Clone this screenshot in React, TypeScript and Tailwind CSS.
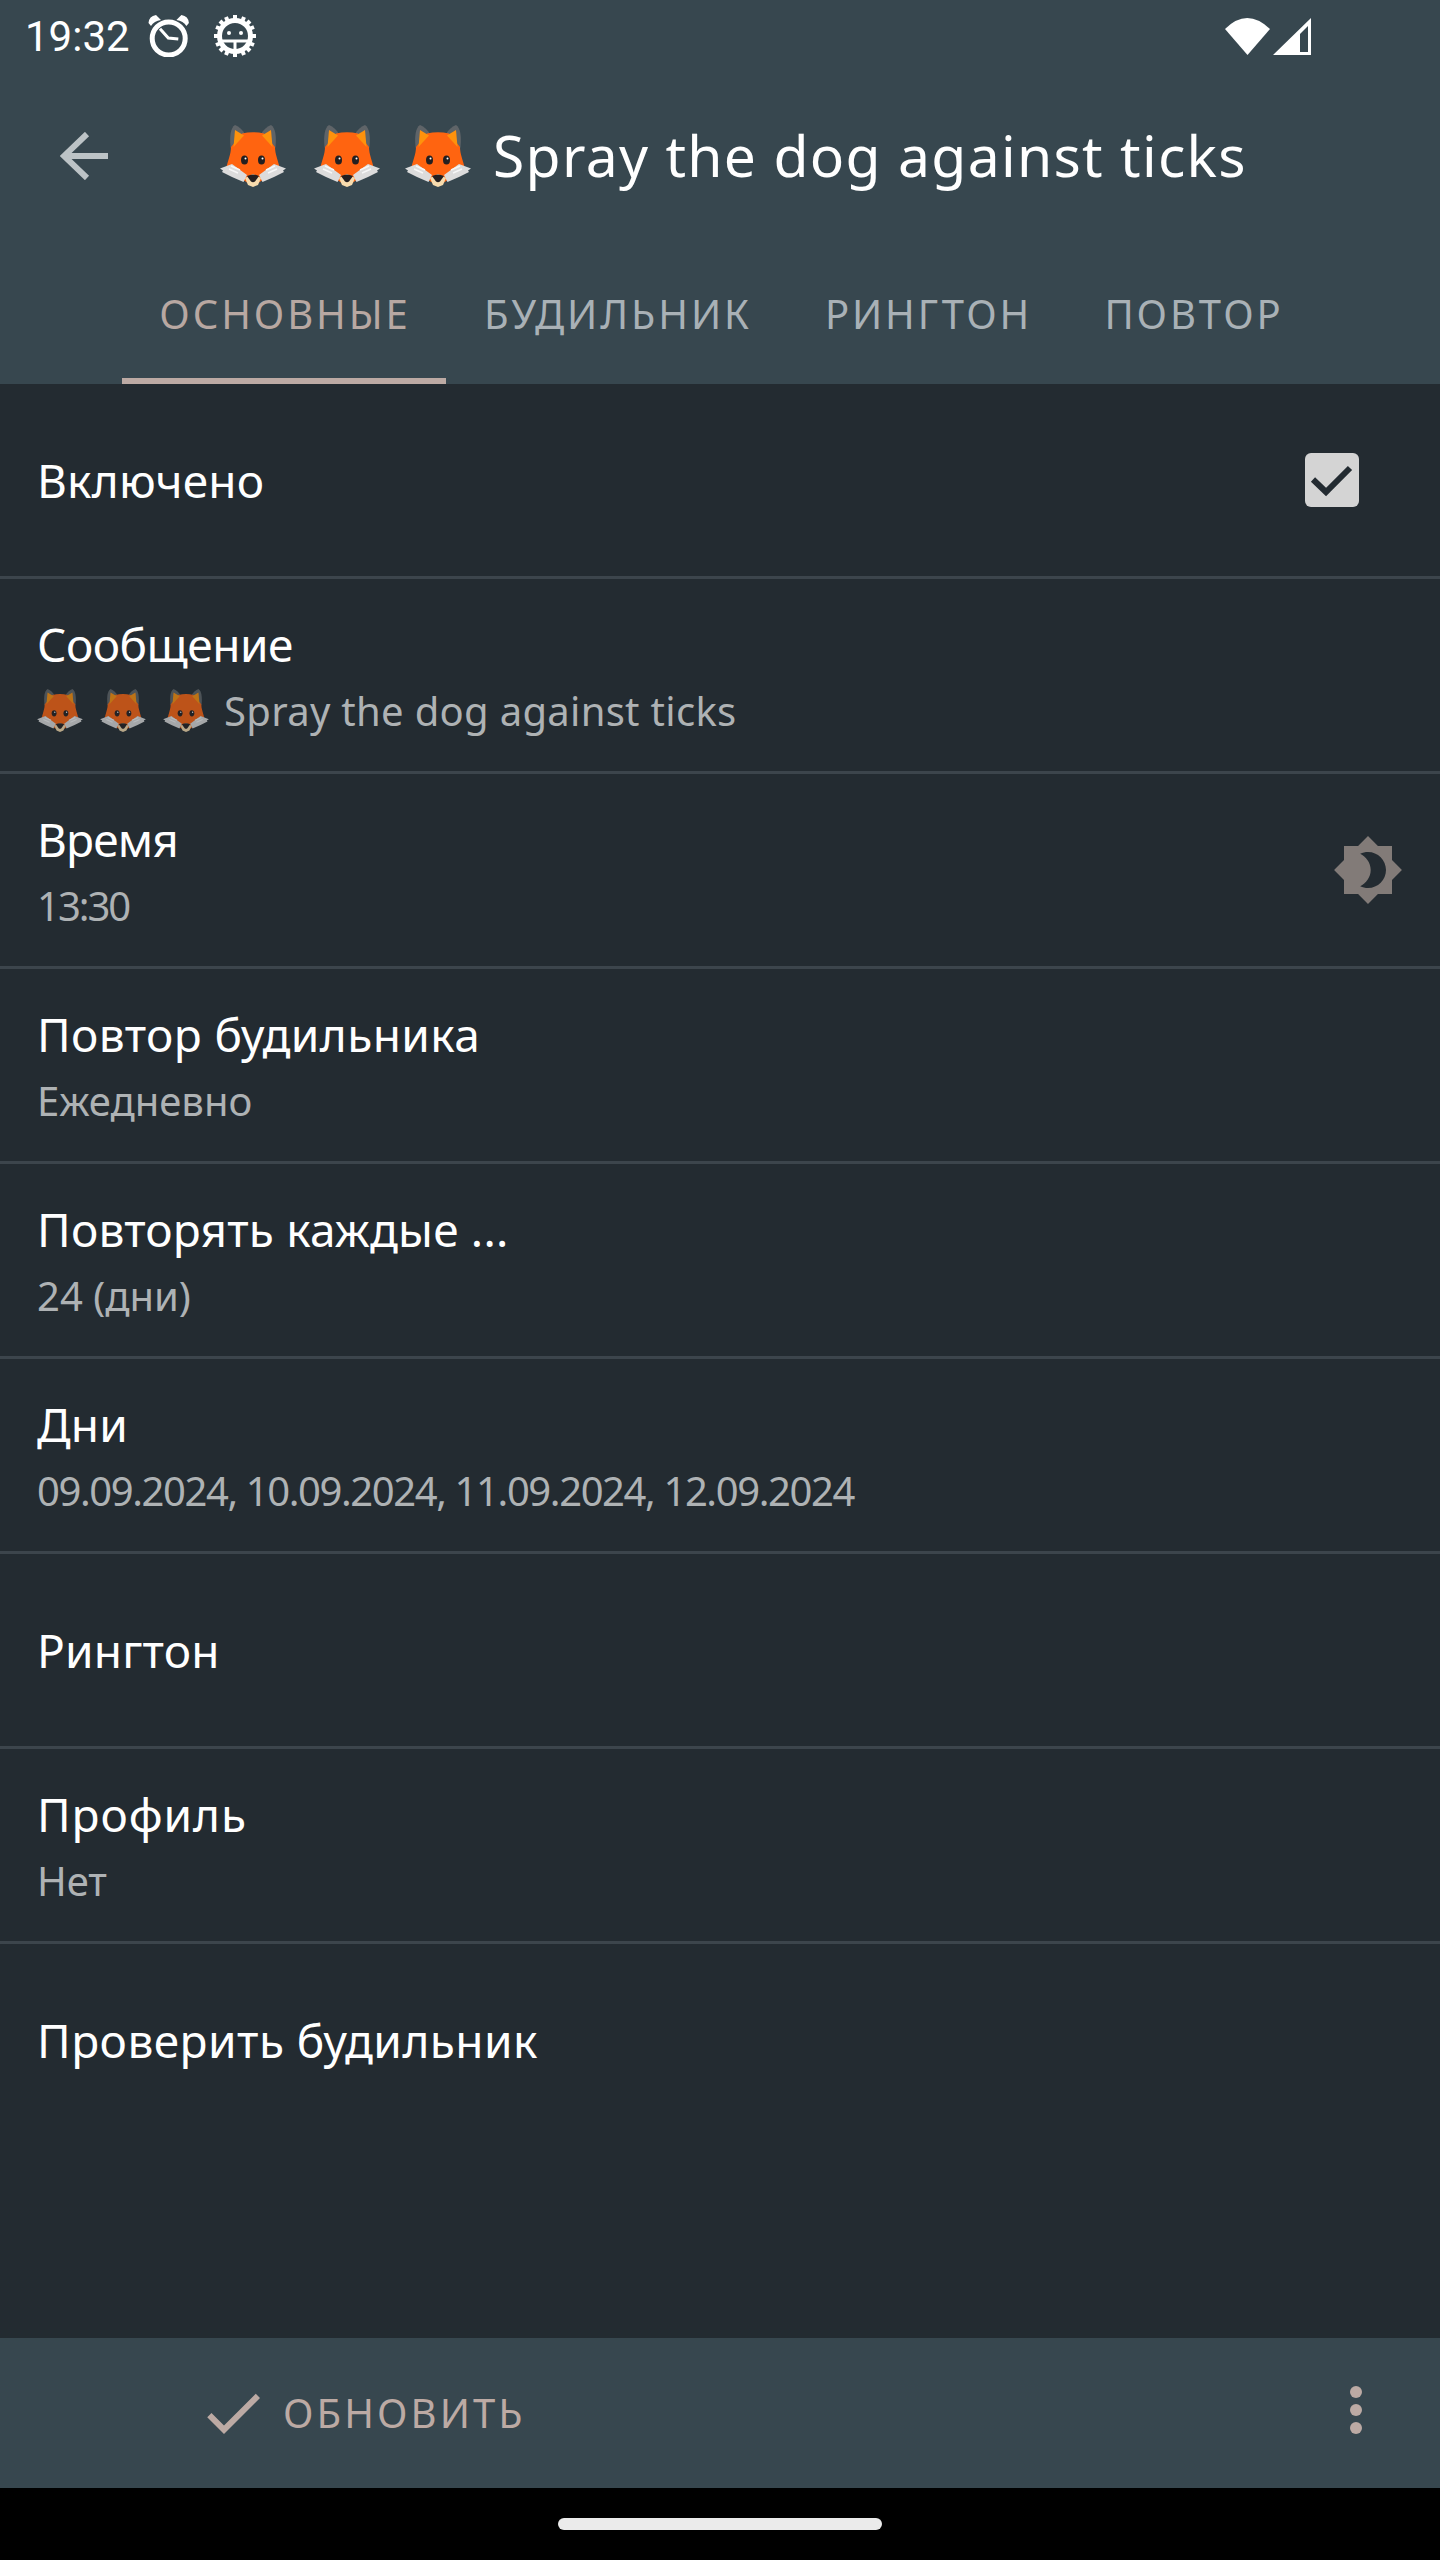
import { ReactNode } from "react";

const UI_FONT = "font-['Noto_Sans','Open_Sans',sans-serif]";

const Fox = ({ className }: { className: string }) => (
  <svg viewBox="0 0 66 62" className={className}>
    <path d="M10.5 22C9.5 11 10.5 3 15 0c4 1.5 8 5 10.5 10L12 26Z" fill="#5f6468" />
    <path d="M55.5 22C56.5 11 55.5 3 51 0c-4 1.5-8 5-10.5 10L54 26Z" fill="#5f6468" />
    <path d="M11 22 22 8.5Q33 6 44 8.5L55 22c0 7 3 13 5 22L35 60h-4L6 44c2-9 5-15 5-22Z" fill="#ff6410" />
    <path d="M15 5 13.5 22 24 10.5Z" fill="#ff920c" />
    <path d="M51 5 52.5 22 42 10.5Z" fill="#ff920c" />
    <path d="M0 43.5 12 39l15 11-3.5 7L12 52 2 47l1-1.5Z" fill="#dcdcdc" />
    <path d="M66 43.5 54 39 39 50l3.5 7L54 52l10-5-1-1.5Z" fill="#dcdcdc" />
    <path d="M9 44l9 4M11 41l9 4M48 48l9-4M46 45l9-4" stroke="#f7f7f7" strokeWidth="1.5" />
    <path d="M25 53l8-4 8 4-3 7-5 2-5-2Z" fill="#f8dcae" />
    <path d="M27 51Q33 48 39 51L35 56.5Q33 58 31 56.5Z" fill="#231f20" />
    <ellipse cx="24.5" cy="35" rx="3.5" ry="4.5" fill="#231f20" />
    <ellipse cx="41.5" cy="35" rx="3.5" ry="4.5" fill="#231f20" />
    <circle cx="25.5" cy="33.5" r="1" fill="white" />
    <circle cx="42.5" cy="33.5" r="1" fill="white" />
  </svg>
);

const Row = ({
  title,
  sub,
  titleClass = "tracking-[0.2px]",
  subClass = "",
  children,
}: {
  title: string;
  sub?: ReactNode;
  titleClass?: string;
  subClass?: string;
  children?: ReactNode;
}) => (
  <div className="h-[195px] border-b-[3px] border-[#3c454c] pl-[37px] flex items-center justify-between">
    <div className="flex flex-col gap-[13px]">
      <div className={`text-[46px] leading-[58px] text-white ${titleClass}`}>{title}</div>
      {sub && <div className={`text-[40px] leading-[50px] text-[#aeb2b4] ${subClass}`}>{sub}</div>}
    </div>
    {children}
  </div>
);

export default function App() {
  return (
    <div className={`w-[1440px] h-[2560px] flex flex-col bg-[#232b31] ${UI_FONT}`}>
      {/* status bar + toolbar + tabs */}
      <div className="h-[384px] bg-[#37474f] flex flex-col shrink-0">
        <div className="h-[72px] pl-[25px] pr-[129px] flex items-center justify-between">
          <div className="flex items-center">
            <span className="font-['Roboto',sans-serif] text-[42px] text-white w-[123px]">19:32</span>
            <svg viewBox="0 0 42 42" fill="none" stroke="white" className="w-[42px] h-[42px]">
              <circle cx="20.7" cy="23.5" r="16.5" strokeWidth="5" />
              <path d="M12 13.7 20.3 23l10 1" strokeWidth="3" />
              <path d="M0.5 8Q1 1 8 0l5 5Q6 6 3 11Z" fill="white" stroke="none" />
              <path d="M40.9 8Q40.4 1 33.4 0l-5 5q7 1 10 6Z" fill="white" stroke="none" />
            </svg>
            <svg viewBox="0 0 44 44" className="w-[44px] h-[44px] ml-[23px]">
              <circle cx="22" cy="22" r="15.5" fill="none" stroke="white" strokeWidth="5" />
              <path d="M22 1v6M22 37v6M1 22h6M37 22h6M7 7l4 4M33 33l4 4M37 7l-4 4M11 33l-4 4M13 3l2 5M31 41l-2-5M31 3l-2 5M13 41l2-5M3 13l5 2M41 31l-5-2M41 13l-5 2M3 31l5-2" stroke="white" strokeWidth="4" />
              <path d="M8 27h28M22 27v10" stroke="white" strokeWidth="3" />
              <circle cx="16" cy="19" r="2" fill="white" />
              <circle cx="28" cy="19" r="2" fill="white" />
            </svg>
          </div>
          <div className="flex items-center gap-[3px]">
            <svg viewBox="0 0 45 37" className="w-[45px] h-[37px]">
              <path d="M0 11 Q22 -11 45 11 L22.5 37 Z" fill="white" />
            </svg>
            <svg viewBox="0 0 38 37" className="w-[38px] h-[37px]">
              <path fillRule="evenodd" d="M38 0V37H0ZM35 8 27 16V34H35Z" fill="white" />
            </svg>
          </div>
        </div>
        <div className="h-[168px] flex items-center relative pl-[60px]">
          <svg viewBox="0 0 48 48" fill="none" stroke="#bcc3c6" strokeWidth="6" className="w-[48px] h-[48px]">
            <path d="M48 24H4M27 2 4 24l23 22" />
          </svg>
          <div className="flex items-center ml-[112px]">
            <Fox className="w-[66px] h-[62px]" />
            <Fox className="w-[66px] h-[62px] ml-[28px]" />
            <Fox className="w-[66px] h-[62px] ml-[25px]" />
            <span className="ml-[22px] text-[57px] text-white tracking-[1.3px] whitespace-nowrap">Spray the dog against ticks</span>
          </div>
        </div>
        <div className="flex-1 flex items-stretch justify-center text-[40px] tracking-[2.9px] text-[#a9b1b6] whitespace-nowrap">
          <div className="w-[324px] pt-[10px] pl-[3px] flex items-center justify-center border-b-[6px] border-[#bcaaa4] text-[#b8a8a2]">ОСНОВНЫЕ</div>
          <div className="w-[342px] pt-[10px] pl-[3px] flex items-center justify-center pb-[6px]">БУДИЛЬНИК</div>
          <div className="w-[279px] pt-[10px] pl-[3px] flex items-center justify-center pb-[6px]">РИНГТОН</div>
          <div className="w-[252px] pt-[10px] pl-[3px] flex items-center justify-center pb-[6px]">ПОВТОР</div>
        </div>
      </div>

      {/* preferences list */}
      <div className="flex-1">
        <Row title="Включено">
          <div className="w-[54px] h-[54px] mr-[81px] rounded-[6px] bg-[#d4d4d4]">
            <svg viewBox="0 0 54 54" fill="none" stroke="#232b31" strokeWidth="6" className="w-[54px] h-[54px]">
              <path d="M8 26.5 21 39 45 15" />
            </svg>
          </div>
        </Row>
        <Row
          title="Сообщение"
          titleClass="tracking-[-0.5px]"
          subClass="tracking-[0.3px]"
          sub={
            <span className="flex items-center">
              <Fox className="w-[46px] h-[43px] opacity-70" />
              <Fox className="w-[46px] h-[43px] ml-[17px] opacity-70" />
              <Fox className="w-[46px] h-[43px] ml-[17px] opacity-70" />
              <span className="ml-[15px] whitespace-nowrap">Spray the dog against ticks</span>
            </span>
          }
        />
        <Row title="Время" titleClass="tracking-[-0.8px]" sub="13:30" subClass="tracking-[-2px]">
          <svg viewBox="0 0 24 24" fill="#827b78" fillRule="evenodd" className="w-[72px] h-[72px] mr-[36px]">
            <path d="M20 8.69V4h-4.69L12 .69 8.69 4H4v4.69L.69 12 4 15.31V20h4.69L12 23.31 15.31 20H20v-4.69L23.31 12 20 8.69zM12 6c-.9 0-1.8.2-2.6.6 1.9.9 3.5 3 3.5 5.4s-1.6 4.5-3.5 5.4c.8.4 1.7.6 2.6.6 3.3 0 6-2.7 6-6s-2.7-6-6-6z" />
          </svg>
        </Row>
        <Row title="Повтор будильника" titleClass="tracking-[0.4px]" sub="Ежедневно" />
        <Row title="Повторять каждые ..." sub="24 (дни)" />
        <Row title="Дни" sub="09.09.2024, 10.09.2024, 11.09.2024, 12.09.2024" subClass="tracking-[-1.4px]" />
        <Row title="Рингтон" />
        <Row title="Профиль" titleClass="tracking-[0.9px]" sub="Нет" />
        <div className="h-[195px] pl-[37px] pb-[3px] flex items-center text-[46px] leading-[58px] text-white tracking-[0.46px]">Проверить будильник</div>
      </div>

      {/* bottom action bar */}
      <div className="h-[150px] bg-[#37474f] flex items-center justify-between shrink-0">
        <div className="flex items-center pl-[197px]">
          <svg viewBox="0 0 24 24" fill="#bcaaa4" className="w-[72px] h-[72px]">
            <path d="M9 16.17 4.83 12l-1.42 1.41L9 19 21 7l-1.41-1.41z" />
          </svg>
          <span className="ml-[14px] text-[40px] tracking-[3.1px] text-[#bcaaa4]">ОБНОВИТЬ</span>
        </div>
        <div className="flex flex-col gap-[6px] pr-[78px] -mt-[6px]">
          <div className="w-[12px] h-[12px] rounded-full bg-[#bcaaa4]" />
          <div className="w-[12px] h-[12px] rounded-full bg-[#bcaaa4]" />
          <div className="w-[12px] h-[12px] rounded-full bg-[#bcaaa4]" />
        </div>
      </div>

      {/* nav bar */}
      <div className="h-[72px] bg-black flex items-center justify-center shrink-0">
        <div className="w-[324px] h-[12px] rounded-full bg-[#ebebeb]" />
      </div>
    </div>
  );
}
